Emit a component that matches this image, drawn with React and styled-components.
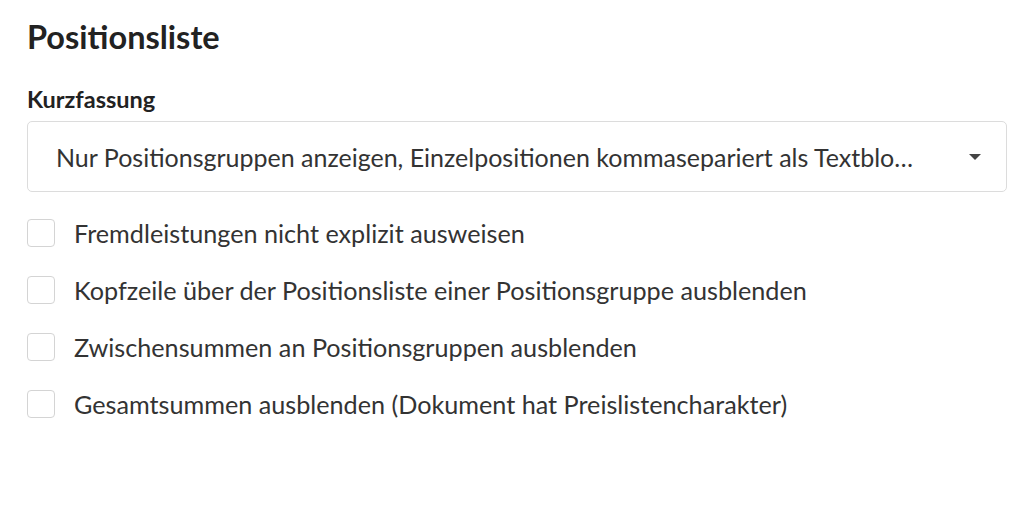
import styled, { createGlobalStyle } from "styled-components";

const GlobalStyle = createGlobalStyle`
  *, *::before, *::after {
    box-sizing: border-box;
  }
  body {
    margin: 0;
    background: #fff;
    font-family: Lato, "Open Sans", sans-serif;
    color: #333;
  }
`;

const Page = styled.section`
  padding: 17px 21px 0 27px;
`;

const Title = styled.h2`
  margin: 0;
  font-size: 32.5px;
  font-weight: 700;
  line-height: 40px;
  color: #222;
`;

const Label = styled.div`
  margin-top: 28px;
  font-size: 23.5px;
  font-weight: 700;
  line-height: 28px;
  color: #222;
`;

const Select = styled.div`
  margin-top: 8px;
  height: 71px;
  border: 1px solid #dcdcdc;
  border-radius: 5px;
  display: flex;
  align-items: center;
  padding: 0 25px 0 28px;
  font-size: 25px;

  span {
    flex: 1;
    white-space: nowrap;
    overflow: hidden;
    text-overflow: ellipsis;
  }
`;

const Caret = styled.i`
  width: 0;
  height: 0;
  margin-left: 46px;
  border-left: 6px solid transparent;
  border-right: 6px solid transparent;
  border-top: 6px solid #444;
`;

const Options = styled.div`
  margin-top: 26px;
  display: flex;
  flex-direction: column;
  gap: 27px;
`;

const Row = styled.label`
  display: flex;
  align-items: center;
  gap: 19px;
  font-size: 25.2px;
  line-height: 30px;
`;

const Box = styled.span`
  width: 28px;
  height: 28px;
  border: 1px solid #d4d4d4;
  border-radius: 4px;
  flex-shrink: 0;
`;

const options = [
  "Fremdleistungen nicht explizit ausweisen",
  "Kopfzeile über der Positionsliste einer Positionsgruppe ausblenden",
  "Zwischensummen an Positionsgruppen ausblenden",
  "Gesamtsummen ausblenden (Dokument hat Preislistencharakter)",
];

const App = () => {
  return (
    <Page>
      <GlobalStyle />
      <Title>Positionsliste</Title>
      <Label>Kurzfassung</Label>
      <Select>
        <span>Nur Positionsgruppen anzeigen, Einzelpositionen kommasepariert als Textblock darstellen</span>
        <Caret />
      </Select>
      <Options>
        {options.map((o) => (
          <Row key={o}>
            <Box />
            {o}
          </Row>
        ))}
      </Options>
    </Page>
  );
};

export default App;
